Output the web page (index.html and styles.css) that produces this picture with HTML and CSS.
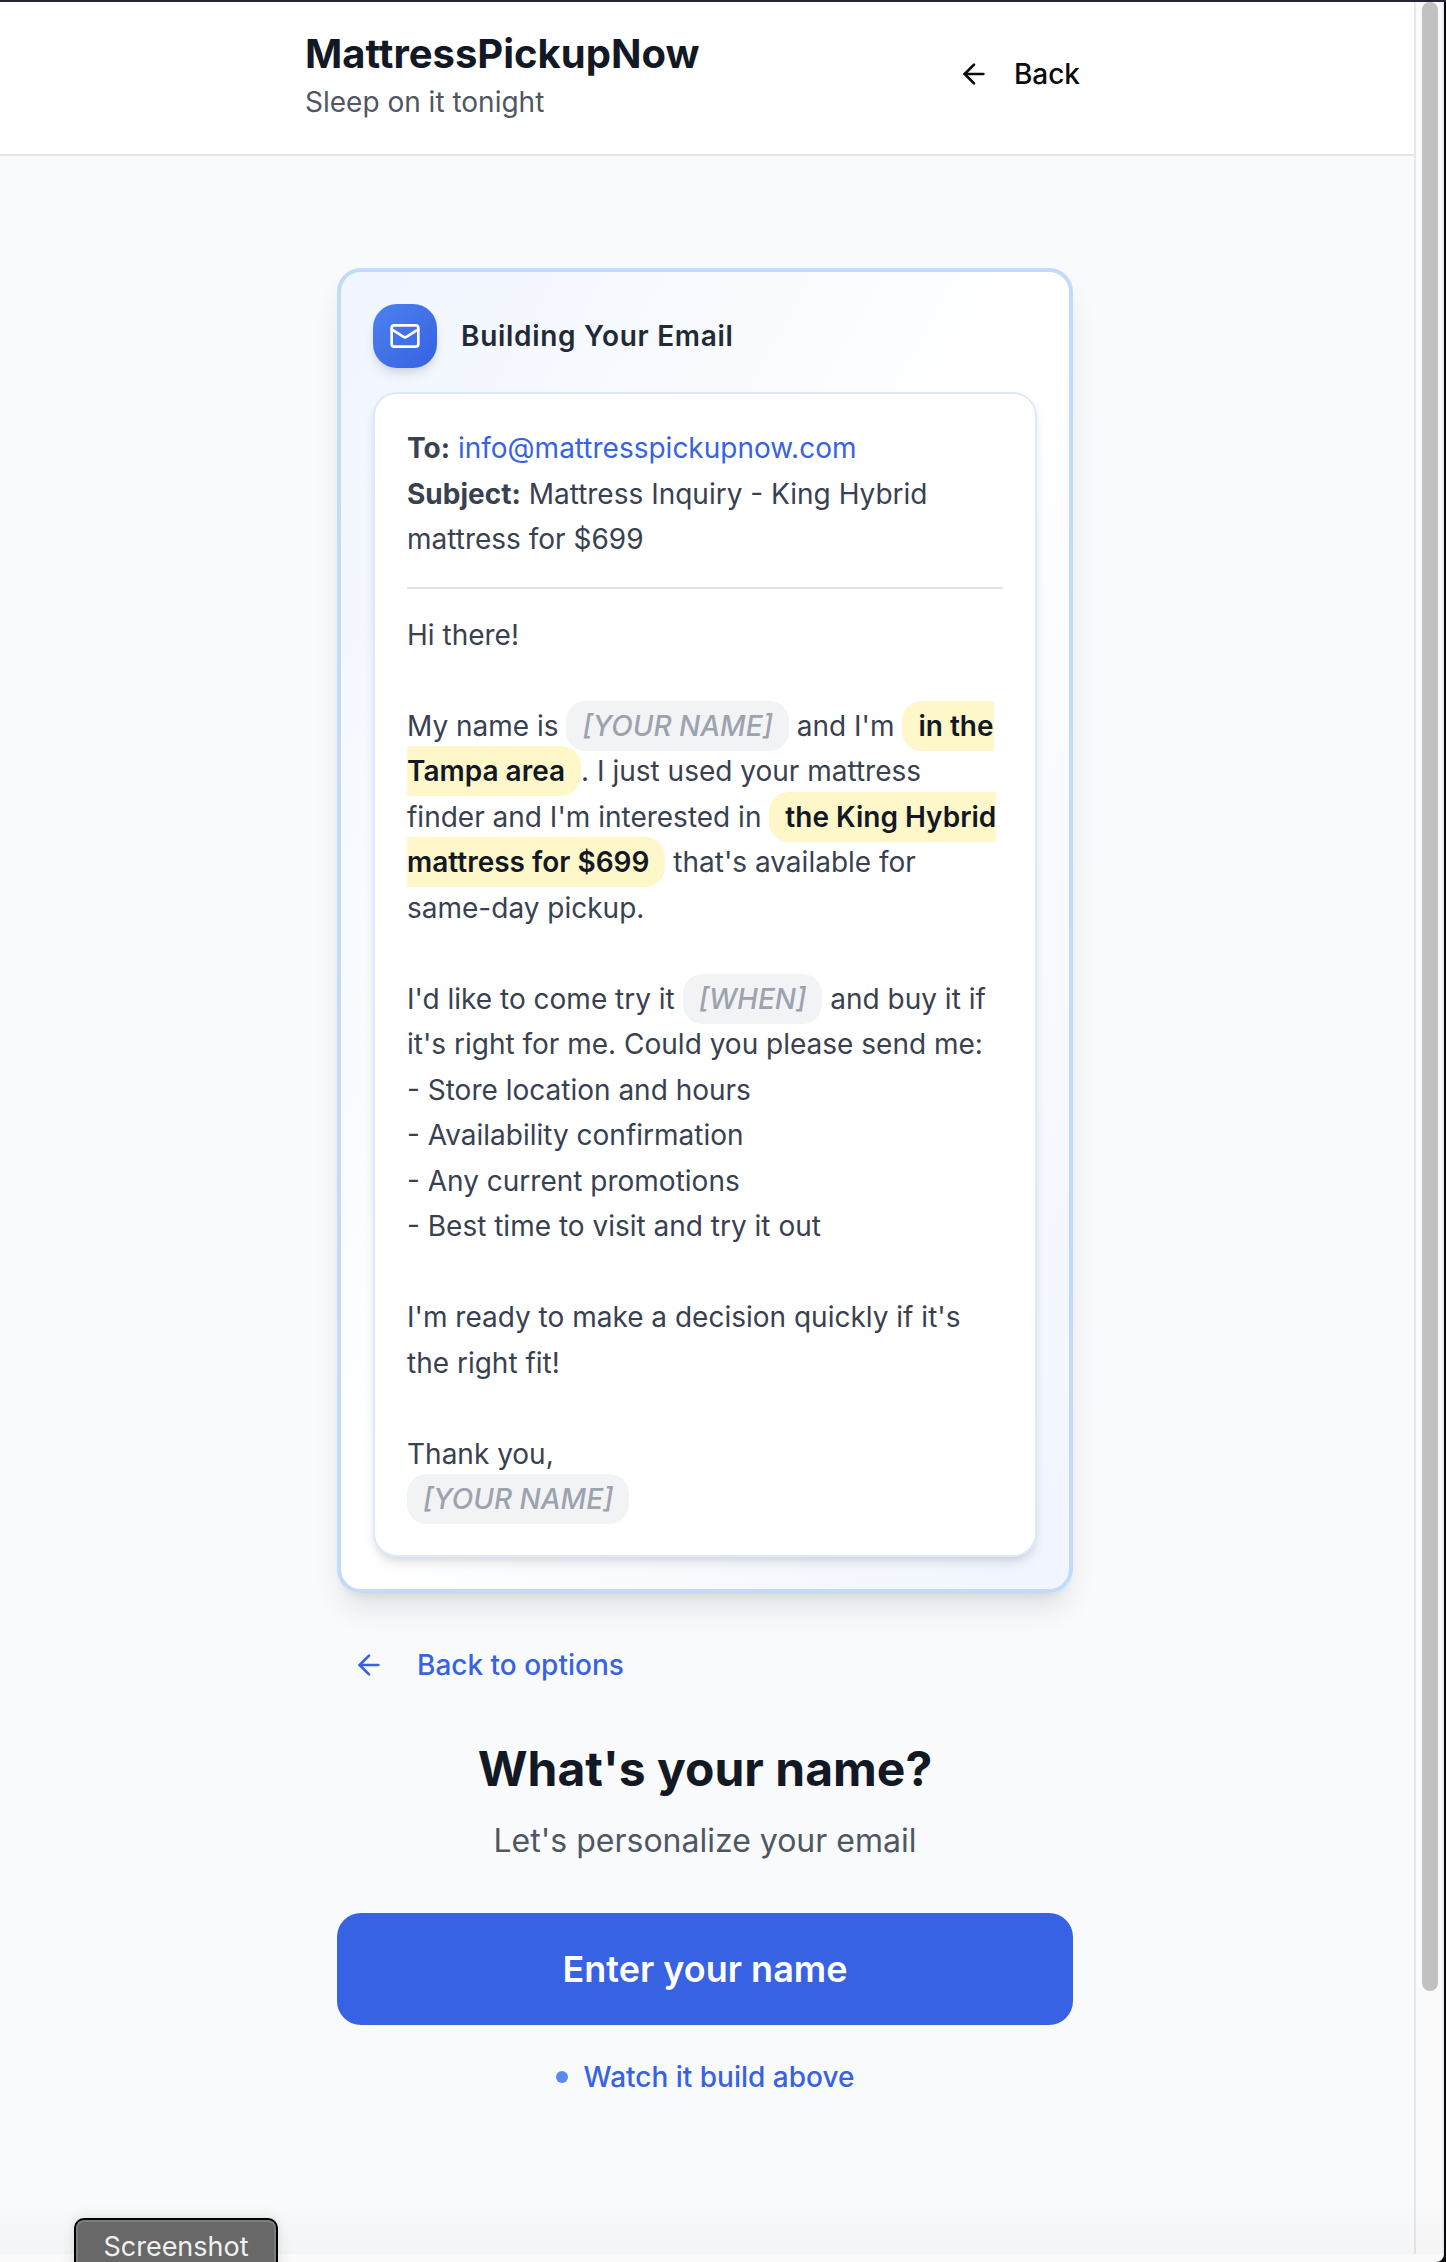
FILE: index.html
```html
<!DOCTYPE html>
<html lang="en">
<head>
<meta charset="utf-8">
<title>MattressPickupNow</title>
<link rel="stylesheet" href="styles.css">
</head>
<body>
<div class="window">
  <div class="viewport">
    <div class="page">
      <header class="site-header">
        <div class="header-inner">
          <div>
            <h1 class="brand">MattressPickupNow</h1>
            <p class="tagline">Sleep on it tonight</p>
          </div>
          <button class="back-button">
            <svg class="icon" viewBox="0 0 24 24"><path d="m12 19-7-7 7-7"/><path d="M19 12H5"/></svg>
            <span>Back</span>
          </button>
        </div>
      </header>
      <main class="content">
        <section class="card">
          <div class="card-head">
            <span class="badge"><svg class="icon" viewBox="0 0 24 24"><rect x="2" y="4" width="20" height="16" rx="2"/><path d="m22 7-8.97 5.7a1.94 1.94 0 0 1-2.06 0L2 7"/></svg></span>
            <h2 class="card-title">Building Your Email</h2>
          </div>
          <div class="email">
            <div class="email-meta">
              <div><strong>To:</strong> <span class="address">info@mattresspickupnow.com</span></div>
              <div><strong>Subject:</strong> Mattress Inquiry - King Hybrid<br>mattress for $699</div>
            </div>
            <div class="email-body">Hi there!<br><br>My name is <span class="blank">[YOUR NAME]</span> and I'm <span class="filled">in the<br>Tampa area</span>. I just used your mattress<br>finder and I'm interested in <span class="filled">the King Hybrid<br>mattress for $699</span> that's available for<br>same-day pickup.<br><br>I'd like to come try it <span class="blank">[WHEN]</span> and buy it if<br>it's right for me. Could you please send me:<br>- Store location and hours<br>- Availability confirmation<br>- Any current promotions<br>- Best time to visit and try it out<br><br>I'm ready to make a decision quickly if it's<br>the right fit!<br><br>Thank you,<br><span class="blank">[YOUR NAME]</span></div>
          </div>
        </section>
        <button class="options-link">
          <svg class="icon" viewBox="0 0 24 24"><path d="m12 19-7-7 7-7"/><path d="M19 12H5"/></svg>
          <span>Back to options</span>
        </button>
        <h2 class="question">What's your name?</h2>
        <p class="hint">Let's personalize your email</p>
        <button class="primary">Enter your name</button>
        <p class="status"><span class="dot"></span><span>Watch it build above</span></p>
      </main>
    </div>
    <div class="scroll-track"><div class="scroll-thumb"></div></div>
    <div class="fade"></div>
  </div>
  <div class="window-foot"></div>
  <div class="tooltip">Screenshot</div>
</div>
</body>
</html>
```
FILE: styles.css
```css
* { box-sizing: border-box; margin: 0; padding: 0; }

body {
  background: #08080c;
  font-family: Inter, "Liberation Sans", sans-serif;
  font-size: 28px;
  line-height: 40px;
  color: #394150;
}

button { border: 0; background: none; font: inherit; color: inherit; }

.icon {
  width: 32px;
  height: 32px;
  flex: none;
  fill: none;
  stroke: currentColor;
  stroke-width: 2;
  stroke-linecap: round;
  stroke-linejoin: round;
}

.window {
  position: relative;
  width: 1446px;
  height: 2262px;
  padding-right: 2px;
  border-top: 2px solid #252631;
  overflow: hidden;
  display: flex;
  flex-direction: column;
}

.viewport {
  position: relative;
  display: flex;
  height: 2252px;
  flex: none;
  background: #f9fafc;
}

.page { flex: 1; }

.site-header {
  height: 154px;
  padding: 24px 0 32px;
  background: #fff;
  border-bottom: 2px solid #e6e7e8;
}

.header-inner {
  width: 799px;
  margin-left: 305px;
  display: flex;
  justify-content: space-between;
  align-items: center;
}

.brand { font-size: 40px; line-height: 56px; font-weight: 700; color: #131825; }
.tagline { color: #4f5763; }

.back-button {
  display: flex;
  align-items: center;
  gap: 24px;
  padding: 20px 24px;
  font-weight: 500;
  color: #0b0b0c;
}

.content {
  width: 736px;
  margin-left: 337px;
  padding-top: 112px;
  display: flex;
  flex-direction: column;
}

.card {
  padding: 32px;
  border: 4px solid #c3dafb;
  border-radius: 24px;
  background: linear-gradient(to bottom right, #f0f5fe, #fff 50%, #f0f5fe);
  box-shadow: 0 20px 30px -6px rgba(0, 0, 0, .1), 0 8px 12px -8px rgba(0, 0, 0, .1);
}

.card-head { display: flex; align-items: center; gap: 24px; margin-bottom: 24px; }

.badge {
  width: 64px;
  height: 64px;
  display: grid;
  place-items: center;
  border-radius: 24px;
  color: #fff;
  background: linear-gradient(135deg, #4c82ee, #3760e2);
  box-shadow: 0 8px 12px -2px rgba(0, 0, 0, .1), 0 4px 8px -4px rgba(0, 0, 0, .1);
}

.card-title { font-size: 28px; font-weight: 600; letter-spacing: .7px; color: #222a36; }

.email {
  padding: 32px;
  border: 2px solid #dde9fc;
  border-radius: 24px;
  background: #fff;
  line-height: 45.5px;
  box-shadow: 0 8px 12px -2px rgba(0, 0, 0, .1), 0 4px 8px -4px rgba(0, 0, 0, .1);
}

.email-meta {
  padding-bottom: 24px;
  margin-bottom: 24px;
  border-bottom: 2px solid #e1e5ea;
}

.email-body { white-space: nowrap; }
.address { color: #3862e4; }

.blank, .filled { padding: 8px 16px; border-radius: 20px; }
.blank { background: #f2f3f5; color: #9da3ae; font-style: italic; font-weight: 500; }
.filled { background: #fdf7ca; color: #131825; font-weight: 600; }

.options-link {
  align-self: flex-start;
  display: flex;
  align-items: center;
  gap: 32px;
  margin-top: 32px;
  padding: 20px 16px;
  font-weight: 500;
  color: #3862e4;
}

.question {
  margin-top: 32px;
  font-size: 48px;
  line-height: 64px;
  font-weight: 700;
  text-align: center;
  color: #131825;
}

.hint {
  margin-top: 16px;
  font-size: 32px;
  line-height: 48px;
  text-align: center;
  color: #4f5763;
}

.primary {
  height: 112px;
  margin-top: 48px;
  border-radius: 24px;
  background: #3862e4;
  font-size: 36px;
  font-weight: 600;
  color: #fff;
}

.status {
  display: flex;
  justify-content: center;
  align-items: center;
  gap: 16px;
  margin-top: 32px;
  font-weight: 500;
  color: #3862e4;
}

.dot { width: 12px; height: 12px; border-radius: 50%; background: #5b8aef; }

.scroll-track {
  width: 30px;
  padding-left: 6px;
  background: #fafafa;
  border-left: 2px solid #e6e7e8;
  border-right: 2px solid #ededed;
}

.scroll-thumb { width: 16px; height: 1989px; border-radius: 8px; background: #c1c1c1; }

/* soft darkening along the lower edge of the viewport */
.fade {
  position: absolute;
  inset: auto 0 0;
  height: 52px;
  background: linear-gradient(rgba(0, 0, 0, 0), rgba(0, 0, 0, .025));
}

.window-foot { height: 8px; flex: none; background: #fafafa; border-bottom-right-radius: 8px; }

.tooltip {
  position: absolute;
  left: 74px;
  top: 2216px;
  width: 204px;
  height: 60px;
  border: 2px solid #000;
  border-radius: 10px;
  box-shadow: inset 0 0 0 2px #7b7d7c, 0 0 14px rgba(0, 0, 0, .12);
  background: #676867;
  color: #f0f0f0;
  font-size: 27px;
  line-height: 54px;
  text-align: center;
}
```
